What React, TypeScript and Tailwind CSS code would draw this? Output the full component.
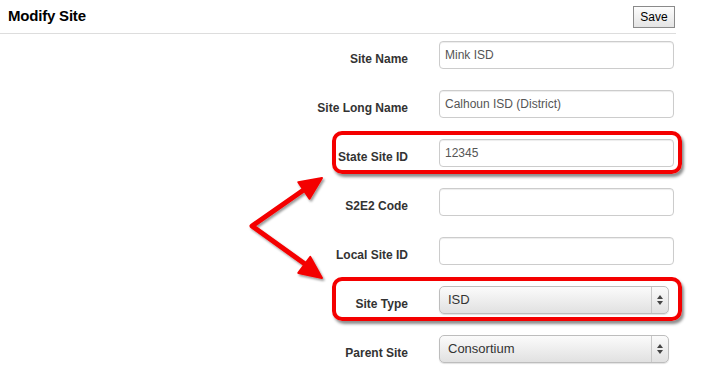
import React from "react";

interface FieldRow {
  label: string;
  value?: string;
  kind: "input" | "select";
}

const rows: FieldRow[] = [
  { label: "Site Name", value: "Mink ISD", kind: "input" },
  { label: "Site Long Name", value: "Calhoun ISD (District)", kind: "input" },
  { label: "State Site ID", value: "12345", kind: "input" },
  { label: "S2E2 Code", value: "", kind: "input" },
  { label: "Local Site ID", value: "", kind: "input" },
  { label: "Site Type", value: "ISD", kind: "select" },
  { label: "Parent Site", value: "Consortium", kind: "select" },
];

function SelectBox({ value }: { value?: string }) {
  return (
    <div className="flex h-[28px] w-[230px] items-stretch rounded-[5px] border border-[#bdbdbd] bg-linear-to-b from-[#fbfbfb] via-[#eeeeee] to-[#e1e1e1] shadow-[0_1px_1px_rgba(0,0,0,0.12)]">
      <div className="flex flex-1 items-center pl-[8px] text-[13px] text-[#333]">{value}</div>
      <div className="flex w-[17px] flex-col items-center justify-center gap-[2px] border-l border-[#c8c8c8]">
        <span className="h-0 w-0 border-x-[3px] border-b-[4px] border-x-transparent border-b-[#444]" />
        <span className="h-0 w-0 border-x-[3px] border-t-[4px] border-x-transparent border-t-[#444]" />
      </div>
    </div>
  );
}

export default function App() {
  return (
    <div className="relative h-[380px] w-[712px] overflow-hidden bg-white font-['Liberation_Sans',Arial,sans-serif]">
      <div className="w-[676px]">
        <div className="flex h-[34px] items-center justify-between border-b border-[#dddddd] pl-[8px] pr-[1px]">
          <h1 className="text-[15px] font-bold tracking-[-0.2px] text-black">Modify Site</h1>
          <button className="h-[22px] w-[42px] border border-[#8a8a8a] bg-linear-to-b from-[#fdfdfd] to-[#e4e4e4] text-[12px] text-black">
            Save
          </button>
        </div>

        <div className="flex flex-col gap-[21px] pt-[7px]">
          {rows.map((row) => (
            <div key={row.label} className="flex items-start gap-[31px]">
              <label className="w-[408px] pt-[10px] text-right text-[12px] leading-[16px] font-bold text-[#333]">
                {row.label}
              </label>
              {row.kind === "input" ? (
                <input
                  readOnly
                  defaultValue={row.value}
                  className="h-[28px] w-[235px] rounded-[4px] border border-[#cccccc] px-[5px] text-[12px] text-[#555] shadow-[inset_0_1px_1px_rgba(0,0,0,0.075)] outline-none"
                />
              ) : (
                <SelectBox value={row.value} />
              )}
            </div>
          ))}
        </div>
      </div>

      {/* annotation boxes */}
      <div className="absolute top-[131px] left-[332px] h-[43px] w-[350px] rounded-[10px] border-[4px] border-[#f40000] shadow-[2px_3px_3px_rgba(0,0,0,0.45)]" />
      <div className="absolute top-[277px] left-[332px] h-[44px] w-[350px] rounded-[10px] border-[4px] border-[#f40000] shadow-[2px_3px_3px_rgba(0,0,0,0.45)]" />

      {/* annotation arrows */}
      <svg className="absolute top-0 left-0" width="712" height="380" viewBox="0 0 712 380">
        <defs>
          <filter id="arrowShadow" x="-10%" y="-10%" width="130%" height="130%">
            <feDropShadow dx="1.5" dy="2" stdDeviation="1.2" floodColor="#000" floodOpacity="0.4" />
          </filter>
        </defs>
        <g filter="url(#arrowShadow)" fill="#f40000" stroke="#f40000" strokeLinejoin="round">
          <polyline points="305,189 252,226 305,264" fill="none" strokeWidth="5" strokeLinecap="round" />
          <polygon points="322,178 309.5,198.7 298.3,182.2" strokeWidth="2" />
          <polygon points="322,278 298.3,272.9 310.3,256.9" strokeWidth="2" />
        </g>
      </svg>
    </div>
  );
}
